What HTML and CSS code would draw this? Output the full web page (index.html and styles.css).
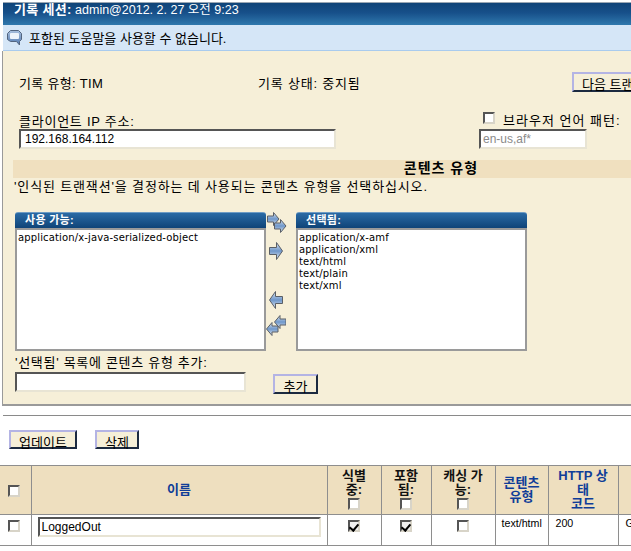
FILE: index.html
```html
<!DOCTYPE html>
<html lang="ko">
<head>
<meta charset="utf-8">
<title>기록 세션</title>
<link rel="stylesheet" href="styles.css">
</head>
<body>
<div class="page">
  <header class="title-bar"><b>기록 세션:</b> admin@2012. 2. 27 오전 9:23</header>
  <div class="help-bar">
    <svg class="help-icon" viewBox="0 0 15 16" width="15" height="16"><defs><linearGradient id="h" x1="0" y1="0" x2="0" y2="1"><stop offset="0" stop-color="#a9c0de"/><stop offset="1" stop-color="#4f78b0"/></linearGradient></defs><path d="M3.5.5h8l3 3v6l-2 2v3.500l-3-3.500h-6l-3-2v-6z" fill="url(#h)" stroke="#53657f"/><rect x="3" y="3" width="9" height="6" rx="1" fill="#eef4fb"/></svg>
    <span>포함된 도움말을 사용할 수 없습니다.</span>
  </div>
  <section class="panel">
    <div class="info-row">
      <span class="info-type">기록 유형: TIM</span>
      <span class="info-state">기록 상태: 중지됨</span>
      <button class="btn btn-next" type="button">다음 트랜잭션</button>
    </div>
    <div class="ip-row">
      <div class="ip-col">
        <label class="field-label ip-label">클라이언트 IP 주소:</label>
        <input class="text-input ip-input" type="text" value="192.168.164.112">
      </div>
      <div class="lang-col">
        <label class="lang-label"><input class="check" type="checkbox"><span>브라우저 언어 패턴:</span></label>
        <input class="text-input lang-input" type="text" value="en-us,af*">
      </div>
    </div>
    <div class="section-bar">콘텐츠 유형</div>
    <p class="desc">'인식된 트랜잭션'을 결정하는 데 사용되는 콘텐츠 유형을 선택하십시오.</p>
    <div class="lists">
      <div class="list-box list-left">
        <div class="list-head">사용 가능:</div>
        <div class="list-body"><div>application/x-java-serialized-object</div></div>
      </div>
      <div class="arrows">
        <svg class="arrow-first" viewBox="0 0 20 21" width="20" height="21"><use href="#ar" x="0" y="0"/><use href="#ar" x="7" y="7"/></svg>
        <svg class="arrow-one" viewBox="0 0 14 18" width="14" height="18"><path d="M.5 5.500h7v-5l6 8.500-6 8.500v-5h-7z" fill="url(#ag)" stroke="#5a5f66"/></svg>
        <svg class="arrow-one arrow-back" viewBox="0 0 14 18" width="14" height="18"><path d="M13.500 5.500h-7v-5L.5 9l6 8.500v-5h7z" fill="url(#ag)" stroke="#5a5f66"/></svg>
        <svg class="arrow-last" viewBox="0 0 20 21" width="20" height="21"><use href="#al" x="8" y="0"/><use href="#al" x="0" y="7"/></svg>
      </div>
      <div class="list-box list-right">
        <div class="list-head">선택됨:</div>
        <div class="list-body">
          <div>application/x-amf</div>
          <div>application/xml</div>
          <div>text/html</div>
          <div>text/plain</div>
          <div>text/xml</div>
        </div>
      </div>
    </div>
    <label class="field-label add-label">'선택됨' 목록에 콘텐츠 유형 추가:</label>
    <div class="add-row">
      <input class="text-input add-input" type="text">
      <button class="btn btn-add" type="button">추가</button>
    </div>
  </section>
  <hr class="rule">
  <div class="actions">
    <button class="btn btn-update" type="button">업데이트</button>
    <button class="btn btn-delete" type="button">삭제</button>
  </div>
  <table class="grid">
    <colgroup>
      <col class="c-check"><col class="c-name"><col class="c-a"><col class="c-b"><col class="c-c"><col class="c-d"><col class="c-e"><col class="c-f">
    </colgroup>
    <thead>
      <tr>
        <th class="first"><input class="check" type="checkbox"></th>
        <th class="blue">이름</th>
        <th class="dark">식별<br>중:<br><input class="check" type="checkbox"></th>
        <th class="dark">포함<br>됨:<br><input class="check" type="checkbox"></th>
        <th class="dark">캐싱 가<br>능:<br><input class="check" type="checkbox"></th>
        <th class="blue">콘텐츠<br>유형</th>
        <th class="blue">HTTP 상<br>태<br>코드</th>
        <th></th>
      </tr>
    </thead>
    <tbody>
      <tr>
        <td class="center first"><input class="check" type="checkbox"></td>
        <td><input class="text-input name-input" type="text" value="LoggedOut"></td>
        <td class="center"><input class="check" type="checkbox" checked></td>
        <td class="center"><input class="check" type="checkbox" checked></td>
        <td class="center"><input class="check" type="checkbox"></td>
        <td class="cell-text">text/html</td>
        <td class="cell-text pad">200</td>
        <td class="cell-text pad">GET</td>
      </tr>
    </tbody>
  </table>
</div>
<svg class="defs" width="0" height="0" aria-hidden="true">
  <defs>
    <linearGradient id="ag" x1="0" y1="0" x2="0" y2="1"><stop offset="0" stop-color="#dbe6f2"/><stop offset=".5" stop-color="#6f97ca"/><stop offset="1" stop-color="#e2eaf3"/></linearGradient>
    <path id="ar" d="M.5 4h6V.5L12 7l-5.500 6.500V10h-6z" fill="url(#ag)" stroke="#5a5f66"/>
    <path id="al" d="M12 4H6V.5L.5 7 6 13.500V10h6z" fill="url(#ag)" stroke="#5a5f66"/>
  </defs>
</svg>
</body>
</html>
```
FILE: styles.css
```css
* { box-sizing: border-box; }
html, body { margin: 0; padding: 0; background: #fff; }
body {
  width: 631px;
  height: 551px;
  overflow: hidden;
  font-family: "Liberation Sans", "Noto Sans CJK KR", sans-serif;
  font-size: 13px;
  color: #000;
}
.page { width: 872px; }
.defs { display: block; }

.title-bar {
  height: 23px;
  margin: 2px 0 0 3px;
  padding-left: 11px;
  border-top: 1px solid #9aa7b4;
  background: linear-gradient(#0f4478 0, #17508a 45%, #2f78ad 100%);
  color: #fff;
  font-size: 12.5px;
  line-height: 13px;
  overflow: hidden;
}
.title-bar b { font-size: 13px; letter-spacing: .3px; }
.help-bar {
  display: flex;
  align-items: center;
  gap: 7px;
  height: 26px;
  margin-left: 3px;
  padding-left: 4px;
  background: #d5e6f7;
  border-bottom: 1px solid #a9cbee;
}
.help-icon { flex: none; }

.panel {
  height: 355px;
  margin-left: 2px;
  border-left: 1px solid #9a9a9a;
  border-bottom: 2px solid #9a9a9a;
  background: #f6efd8;
}
.panel::before { content: ""; display: block; height: 21px; }
.info-row {
  display: flex;
  align-items: center;
  height: 20px;
  padding-left: 16px;
}
.info-type { width: 239px; letter-spacing: .3px; }
.info-state { width: 314px; letter-spacing: .8px; }

.btn {
  padding: 0 0 1px;
  height: 20px;
  font: 13px "Liberation Sans", "Noto Sans CJK KR", sans-serif;
  color: #000;
  background: #f6efd8;
  border: 2px solid;
  border-color: #b4b4e4 #1c2a40 #1c2a40 #b4b4e4;
  white-space: nowrap;
}
.btn-next { flex: none; padding: 0 8px; }

.ip-row {
  display: flex;
  height: 44px;
  margin-top: 16px;
}
.ip-col { width: 476px; padding-left: 16px; padding-top: 7px; }
.field-label { display: block; line-height: 14px; }
.ip-label { letter-spacing: .75px; }
.text-input {
  display: block;
  height: 20px;
  padding: 0 2px;
  font: 12px "Liberation Sans", sans-serif;
  color: #000;
  background: #fff;
  border: 2px solid;
  border-color: #555 #e8e4d4 #e8e4d4 #555;
  outline: none;
}
.ip-input { width: 317px; padding-left: 4px; }
.lang-col { padding-top: 1px; }
.lang-label { display: flex; align-items: center; gap: 8px; height: 17px; margin-left: 4px; letter-spacing: 1px; }
.lang-label .check { margin-top: 0; }
.lang-label span { position: relative; top: 2px; }
.lang-input { width: 108px; margin-top: 3px; color: #8a8a8a; }

.check {
  appearance: none;
  -webkit-appearance: none;
  display: inline-block;
  width: 12px;
  height: 12px;
  margin: 0;
  background: #fff;
  border: 2px solid;
  border-color: #555 #d8d4c8 #d8d4c8 #555;
  position: relative;
  vertical-align: middle;
}
.check:checked { background: #efefef; }
.check:checked::after {
  content: "";
  position: absolute;
  left: 1px;
  top: 0;
  width: 4px;
  height: 7px;
  border: solid #000;
  border-width: 0 2px 2px 0;
  transform: rotate(40deg);
}

.section-bar {
  width: 856px;
  height: 18px;
  margin: 8px 0 0 10px;
  background: #f0e0bf;
  font-size: 14px;
  letter-spacing: 1px;
  font-weight: bold;
  text-align: center;
  line-height: 16px;
}
.desc {
  margin: 0 0 0 11px;
  height: 34px;
  line-height: 17px;
  letter-spacing: .85px;
}

.lists { display: flex; height: 139px; margin-left: 12px; }
.list-box { display: flex; flex-direction: column; flex: none; }
.list-left { width: 251px; }
.list-right { width: 231px; }
.list-head {
  height: 16px;
  padding-left: 10px;
  border-top: 1px solid #6f9cc4;
  border-radius: 3px 3px 0 0;
  background: linear-gradient(#2a6aa5, #0f4478);
  color: #fff;
  font-size: 11px;
  letter-spacing: .3px;
  font-weight: bold;
  line-height: 15px;
}
.list-body {
  flex: 1;
  padding: 2px 1px;
  background: #fff;
  border: 2px solid #9a9a9a;
  font: 10px/12px "DejaVu Sans", sans-serif;
  letter-spacing: .14px;
  color: #000;
}
.arrows { width: 30px; display: flex; flex-direction: column; align-items: flex-start; }
.arrow-first { display: block; margin-left: 1px; }
.arrow-one { display: block; margin: 9px 0 0 3px; }
.arrow-back { margin-top: 31px; }
.arrow-last { display: block; margin-top: 6px; }

.add-label { margin: 5px 0 0 12px; letter-spacing: .7px; }
.add-row { display: flex; margin: 2px 0 0 12px; }
.add-input { width: 231px; }
.btn-add { width: 45px; margin: 2px 0 0 27px; }

.rule {
  margin: 9px 0 0 3px;
  height: 1px;
  border: 0;
  background: #8a8a8a;
}
.actions { display: flex; gap: 18px; padding: 14px 0 0 9px; height: 49px; }
.btn-update { width: 68px; height: 19px; }
.btn-delete { width: 44px; height: 19px; }

.grid {
  table-layout: fixed;
  border-collapse: collapse;
  width: 872px;
  color: #000;
}
.c-check { width: 31px; }
.c-name { width: 296px; }
.c-a { width: 54px; }
.c-b { width: 50px; }
.c-c { width: 64px; }
.c-d { width: 53px; }
.c-e { width: 70px; }
.c-f { width: 254px; }
.grid th, .grid td { border: 1px solid #8e8e8e; padding: 0; }
.grid .first { border-left: 0; padding-right: 2px; }
.grid th {
  height: 49px;
  background: #eedfbf;
  font-size: 13px;
  line-height: 14px;
  font-weight: bold;
  text-align: center;
}
.grid th.dark .check { vertical-align: top; margin-top: 1px; }
.grid td { height: 31px; vertical-align: top; }
.grid td.center { text-align: center; }
.grid td .check { margin-top: 4px; }
.blue { color: #0f3d98; }
.dark { color: #111; }
.grid .cell-text { font-size: 10.67px; line-height: 13px; padding: 2px 0 0 6px; }
.grid .pad { padding-left: 7px; }
.name-input { width: 283px; margin: 2px 0 0 6px; }
```
